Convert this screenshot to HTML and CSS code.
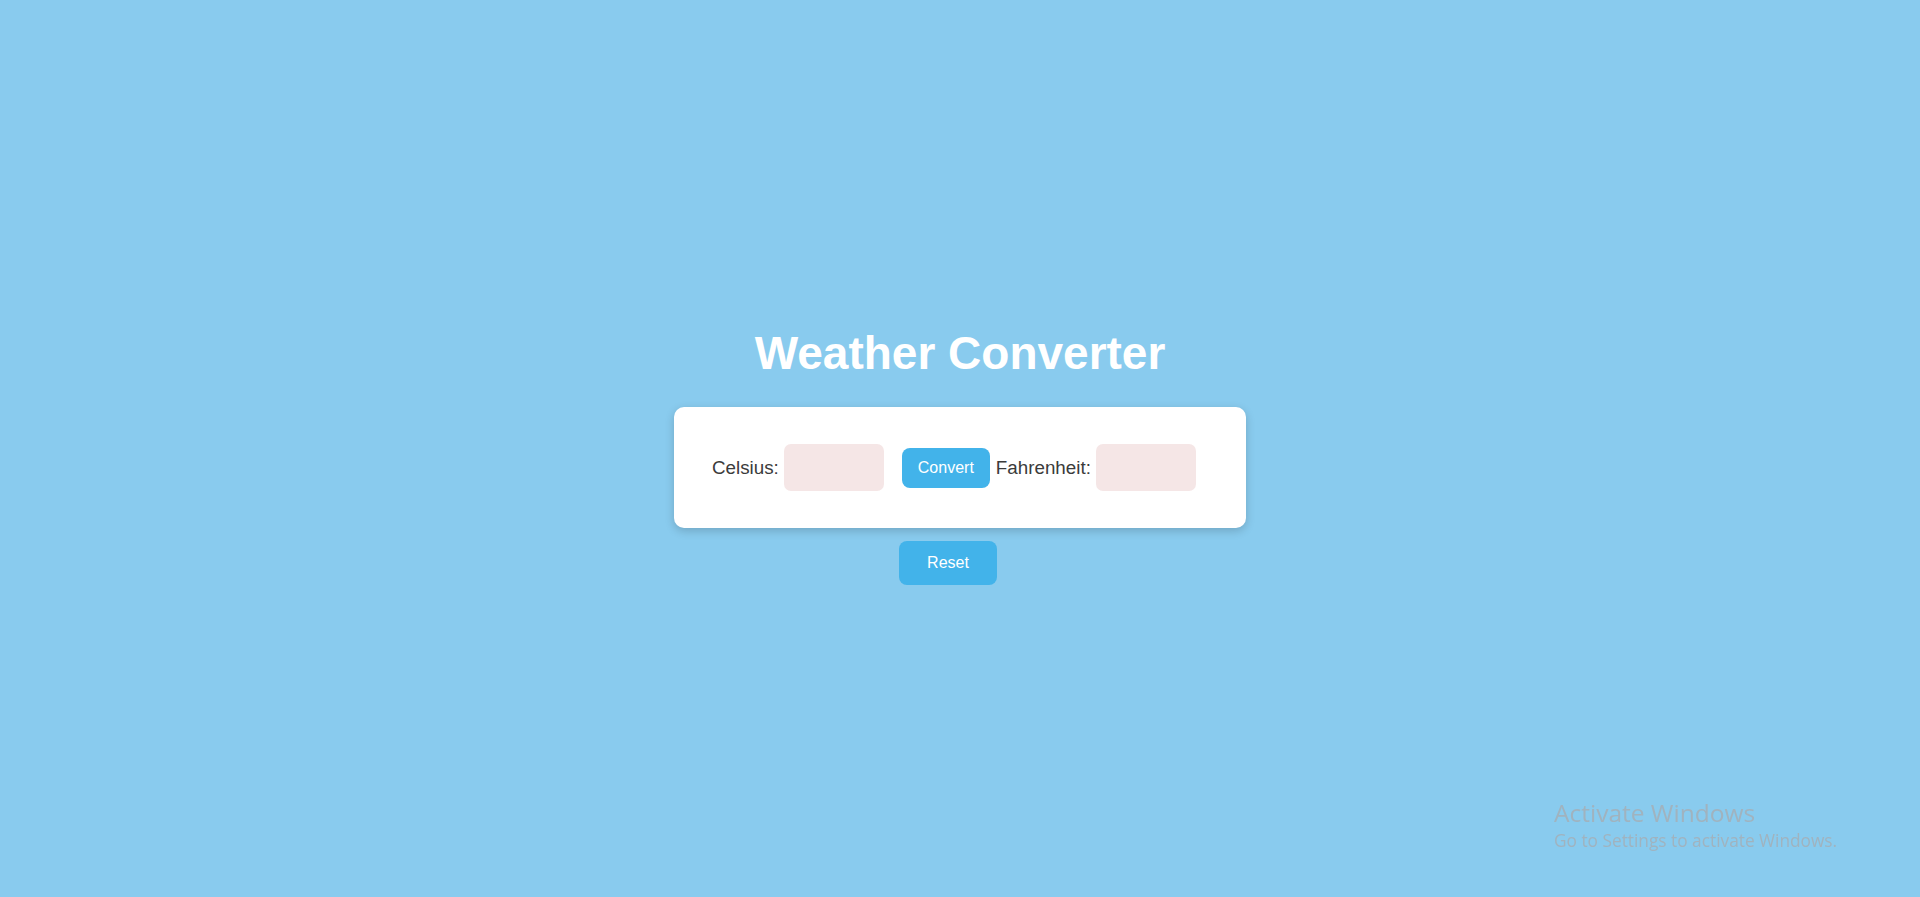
FILE: index.html
```html
<!DOCTYPE html>
<html lang="en">
<head>
<meta charset="utf-8">
<title>Weather Converter</title>
<link rel="stylesheet" href="styles.css">
</head>
<body>
  <h1 class="title">Weather Converter</h1>
  <div class="card">
    <label class="label" for="celsius">Celsius:</label>
    <input class="field field-c" id="celsius" type="text">
    <button class="btn btn-convert" type="button">Convert</button>
    <label class="label label-f" for="fahrenheit">Fahrenheit:</label>
    <input class="field field-f" id="fahrenheit" type="text">
  </div>
  <button class="btn btn-reset" type="button">Reset</button>

  <div class="watermark">
    <div class="wm-title">Activate Windows</div>
    <div class="wm-sub">Go to Settings to activate Windows.</div>
  </div>
</body>
</html>
```

FILE: styles.css
```css
html {
  background: #89cbee;
}

body {
  box-sizing: border-box;
  margin: 8px;
  padding-top: 14px;
  min-height: calc(100vh - 16px);
  background: #89cbee;
  font-family: "Liberation Sans", Arial, sans-serif;
  display: flex;
  flex-direction: column;
  align-items: center;
  justify-content: center;
}

.title {
  margin: 0 0 27px;
  font-size: 46px;
  font-weight: bold;
  color: #ffffff;
  line-height: normal;
}

.card {
  box-sizing: border-box;
  width: 572px;
  padding: 37px 36px 37px 38px;
  background: #ffffff;
  border-radius: 10px;
  box-shadow: 0 3px 10px rgba(0, 0, 0, 0.18);
  display: flex;
  align-items: center;
}

.label {
  font-size: 18.8px;
  color: #3b3b3b;
}

.field {
  box-sizing: border-box;
  width: 100px;
  height: 47px;
  border: none;
  border-radius: 7px;
  background: #f5e6e6;
  outline: none;
}

.field-c {
  margin-left: 5px;
}

.field-f {
  margin-left: 5px;
}

.btn {
  border: none;
  background: #42b3ea;
  color: #ffffff;
  font-family: "Liberation Sans", Arial, sans-serif;
  font-size: 16px;
  cursor: pointer;
}

.btn-convert {
  height: 40px;
  padding: 0 16px;
  margin-left: 18px;
  margin-right: 6px;
  border-radius: 8px;
}

.btn-reset {
  margin-top: 13px;
  margin-right: 24px;
  width: 98px;
  height: 44px;
  border-radius: 8px;
}

.watermark {
  position: fixed;
  left: 1554px;
  top: 797px;
  font-family: "Open Sans", "Noto Sans", sans-serif;
  color: #a0b3bf;
}

.wm-title {
  font-size: 24.5px;
  line-height: 31px;
}

.wm-sub {
  font-size: 17.3px;
  line-height: 25px;
}
```
